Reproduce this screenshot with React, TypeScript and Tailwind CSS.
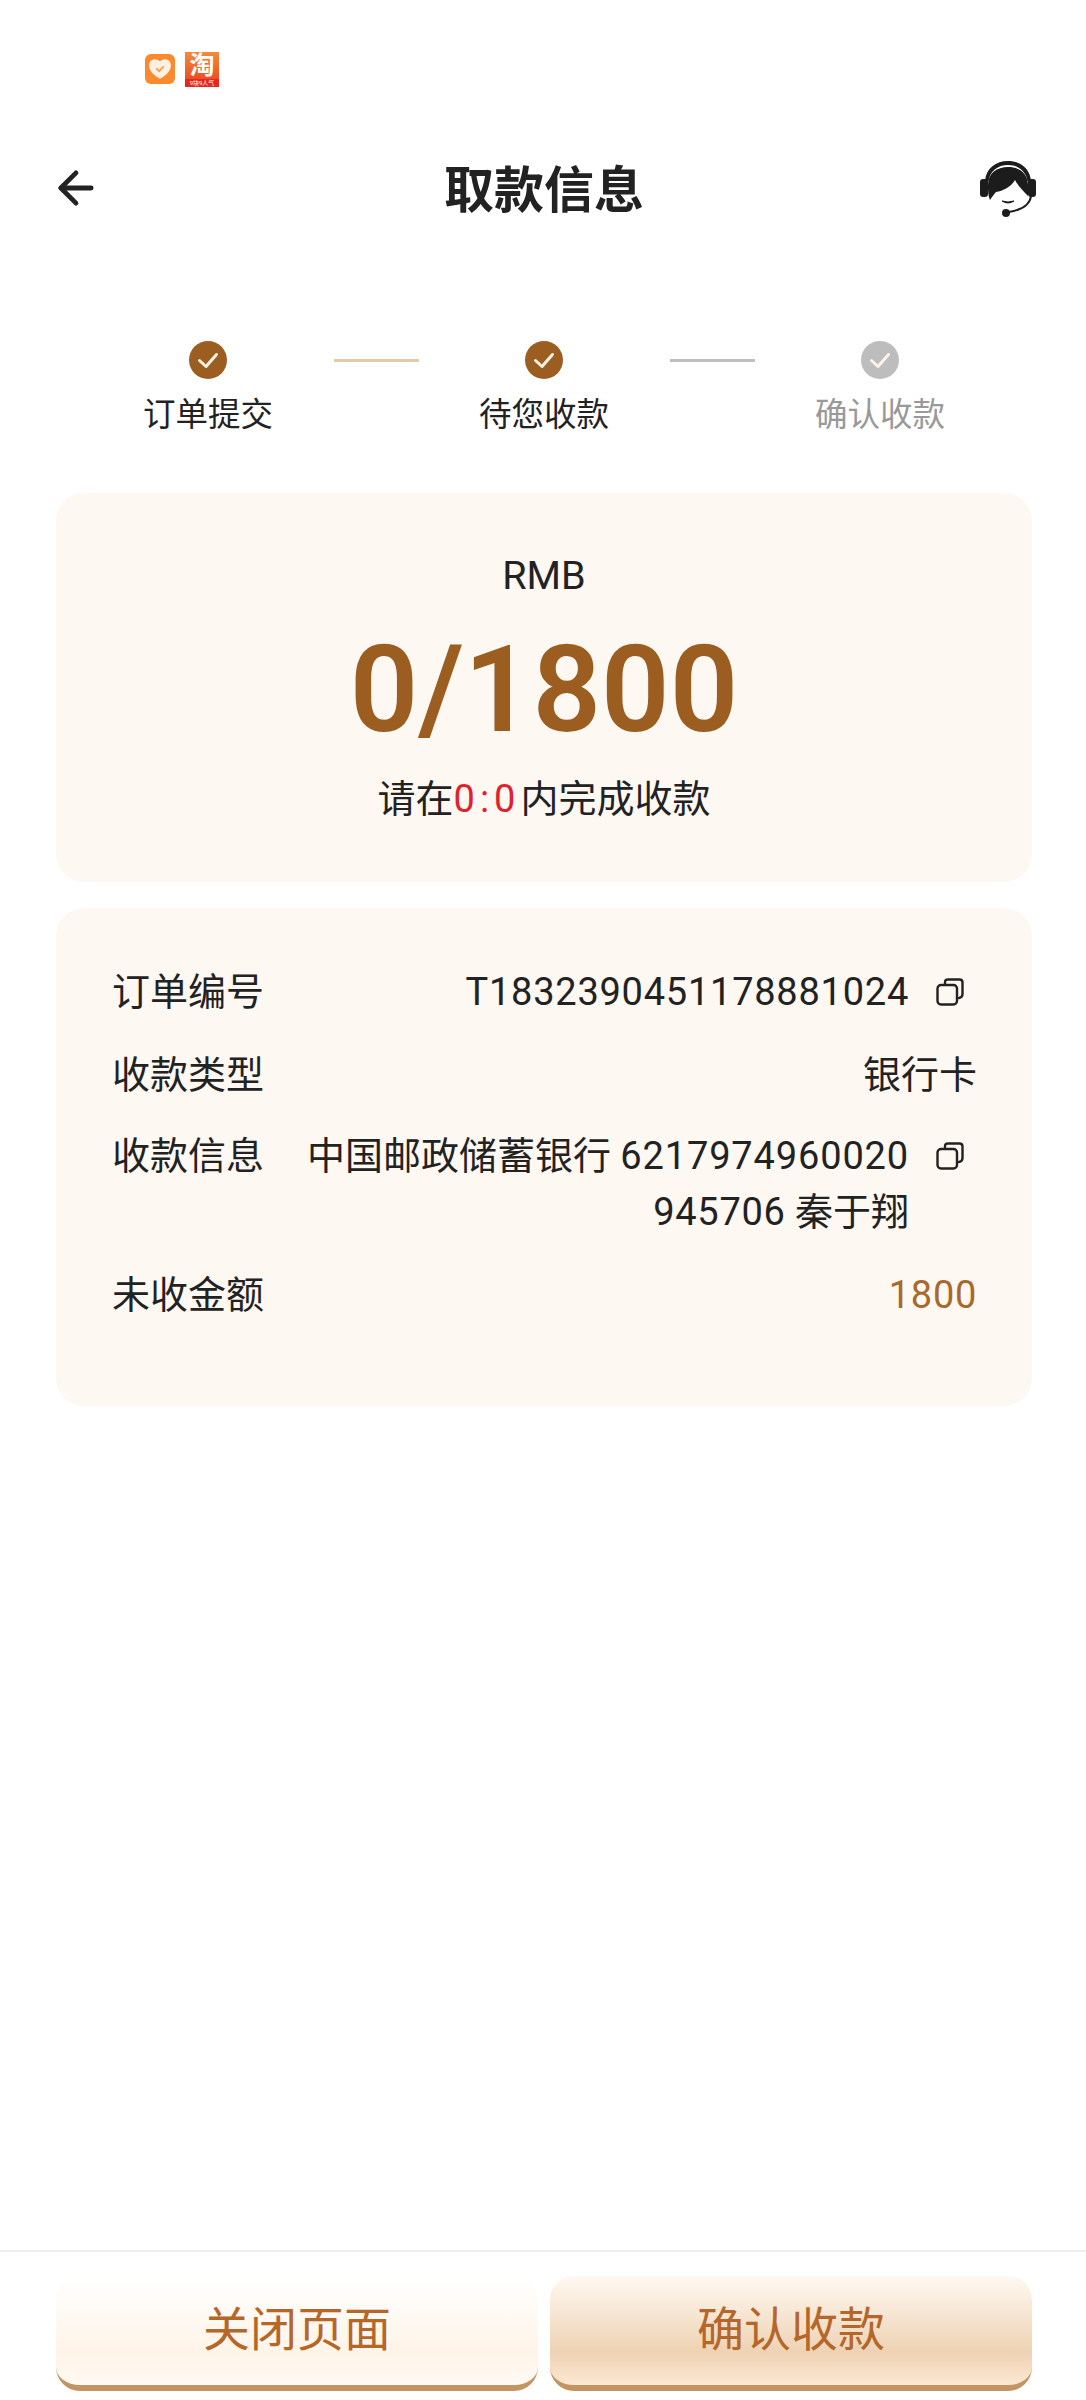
import { ArrowLeft } from "lucide-react";

const CopyIcon = () => (
  <svg width="28" height="28" viewBox="0 0 28 28" fill="none" stroke="#222" strokeWidth="2.4">
    <path d="M9 5.5 V4.5 Q9 1.5 12 1.5 H23.5 Q26.5 1.5 26.5 4.5 V16 Q26.5 19.5 23 20" strokeLinecap="round" />
    <rect x="1.5" y="7" width="19.5" height="19.5" rx="3.5" />
  </svg>
);

const HeadsetIcon = () => (
  <svg width="58" height="58" viewBox="0 0 58 58">
    {/* band */}
    <path d="M6 21 C7 8 17 1 29 1 C41 1 51 8 52 21 L48.5 21 C47 11 39 5 29 5 C19 5 11 11 9.5 21 Z" fill="#1c1c1c" />
    {/* hair */}
    <path d="M9 25 C9 13 18 7 29 7 C40 7 49 13 49 25 L49 36 C44 31 39 26 36 20 C32 27 24 31 17 32 C15 34 13 37 11 40 C9 36 9 30 9 25 Z" fill="#1c1c1c" />
    {/* ear cups */}
    <rect x="1" y="19" width="8" height="18" rx="3" fill="#1c1c1c" />
    <rect x="49" y="19" width="8" height="18" rx="3" fill="#1c1c1c" />
    {/* smile */}
    <path d="M23 41 Q29 45 35 41 Q29 43 23 41 Z" fill="#1c1c1c" stroke="#1c1c1c" strokeWidth="1" />
    {/* mic boom */}
    <path d="M52 36 C51 45 42 50 30 52" fill="none" stroke="#1c1c1c" strokeWidth="2" />
    <circle cx="27" cy="53" r="4" fill="#1c1c1c" />
  </svg>
);

const CheckBadge = ({ color }: { color: string }) => (
  <svg width="38" height="38" viewBox="0 0 38 38">
    <circle cx="19" cy="19" r="19" fill={color} />
    <path d="M10.5 19.5 L17 25.5 L27.5 13.5" fill="none" stroke="#fdf3e6" strokeWidth="3" strokeLinecap="round" strokeLinejoin="round" />
  </svg>
);

const steps = [
  { label: "订单提交", color: "#9b5e20", text: "text-[#222222]" },
  { label: "待您收款", color: "#9b5e20", text: "text-[#222222]" },
  { label: "确认收款", color: "#bdbdbd", text: "text-[#999999]" },
];

const App = () => {
  return (
    <div
      className="flex h-[2400px] w-[1086px] flex-col overflow-hidden bg-white text-[#222222]"
      style={{ fontFamily: 'Roboto, "Noto Sans CJK SC", sans-serif' }}
    >
      {/* Status bar notification icons */}
      <div className="flex h-[88px] items-center gap-[10px] pl-[145px] pt-[50px]">
        <div className="flex h-[30px] w-[30px] items-center justify-center rounded-[6px] bg-[#fb8a2e]">
          <svg width="24" height="22" viewBox="0 0 22 20">
            <path d="M11 19 C4 15 1 11 1 6.5 C1 3 3.5 1 6.5 1 C8.5 1 10 2 11 3 C12 2 13.5 1 15.5 1 C18.5 1 21 3 21 6.5 C21 11 18 15 11 19 Z" fill="#fff1e2" />
            <path d="M7.5 9.5 L10.2 12 L14.5 7.5" fill="none" stroke="#f5a052" strokeWidth="1.6" />
          </svg>
        </div>
        <div className="flex h-[35px] w-[34px] flex-col items-center overflow-hidden bg-gradient-to-b from-[#f58a3c] to-[#e8341c] text-white">
          <span className="text-[25px] font-bold leading-[27px]">淘</span>
          <span className="w-full bg-[#e8261c] text-center text-[6px] leading-[8px]">9块9人气</span>
        </div>
      </div>

      {/* Title bar */}
      <div className="relative flex h-[200px] justify-center pl-[2px] pt-[73px]">
        <ArrowLeft className="absolute left-[50px] top-[74px] h-[52px] w-[52px]" strokeWidth={2.2} color="#222222" />
        <h1 className="text-[50px] font-bold leading-[60px]">取款信息</h1>
        <div className="absolute left-[979px] top-[72px]">
          <HeadsetIcon />
        </div>
      </div>

      {/* Progress steps */}
      <div className="flex justify-center pl-[2px] pt-[53px]">
        {steps.map((step, i) => (
          <div key={step.label} className="flex">
            {i > 0 && <div className={`mt-[18px] h-[3px] w-[85px] ${i === 1 ? "bg-[#e3cba6]" : "bg-[#bfbfbf]"}`} />}
            <div className="flex w-[251px] flex-col items-center">
              <CheckBadge color={step.color} />
              <span className={`mt-[14px] text-[32.5px] leading-[44px] ${step.text}`}>{step.label}</span>
            </div>
          </div>
        ))}
      </div>

      {/* Amount card */}
      <div className="ml-[56px] mr-[54px] mt-[56px] flex h-[389px] flex-col items-center rounded-[28px] bg-[#fdf8f2]">
        <span className="mt-[58px] text-[39.5px] leading-[50px]">RMB</span>
        <span className="mt-[16px] text-[120px] font-semibold leading-[146px] text-[#9b5e20]">0/1800</span>
        <span className="mt-[11px] text-[38px] leading-[50px]">
          请在<span className="tracking-[5px] text-[#e0222c]">0:0</span>内完成收款
        </span>
      </div>

      {/* Order details card */}
      <div className="ml-[56px] mr-[54px] mt-[26px] flex h-[498px] flex-col rounded-[28px] bg-[#fdf8f2] pl-[56px] pr-[55px] pt-[56px] text-[38px] leading-[56px]">
        <div className="flex justify-between">
          <span>订单编号</span>
          <span className="flex items-center gap-[27px] pr-[13px]">
            <span className="tracking-[0.75px]">T1832390451178881024</span>
            <CopyIcon />
          </span>
        </div>
        <div className="mt-[27px] flex justify-between">
          <span>收款类型</span>
          <span>银行卡</span>
        </div>
        <div className="mt-[25px] flex justify-between">
          <span>收款信息</span>
          <div className="flex items-start gap-[27px] pr-[13px]">
            <span className="text-right">
              中国邮政储蓄银行 <span className="tracking-[0.85px]">6217974960020</span>
              <br />
              <span className="tracking-[0.7px]">945706</span> 秦于翔
            </span>
            <span className="mt-[14px]">
              <CopyIcon />
            </span>
          </div>
        </div>
        <div className="mt-[27px] flex justify-between">
          <span>未收金额</span>
          <span className="tracking-[0.7px] text-[#a9682c]">1800</span>
        </div>
      </div>

      {/* Bottom action bar */}
      <div className="mt-auto flex gap-[12px] border-t-2 border-[#eeeeee] px-[54px] pb-[9px] pl-[56px] pt-[24px]">
        <button className="h-[115px] w-[482px] rounded-[24px] border-b-[6px] border-[#c39563] bg-gradient-to-b from-[#ffffff] via-[#fff4e8] via-70% to-[#fffaf4] text-[47px] text-[#b5672a]">
          关闭页面
        </button>
        <button className="h-[115px] w-[482px] rounded-[24px] border-b-[6px] border-[#c39563] bg-gradient-to-b from-[#fff9f2] via-[#eed2b4] via-70% to-[#fde8d2] text-[47px] text-[#b5672a]">
          确认收款
        </button>
      </div>
    </div>
  );
};

export default App;
